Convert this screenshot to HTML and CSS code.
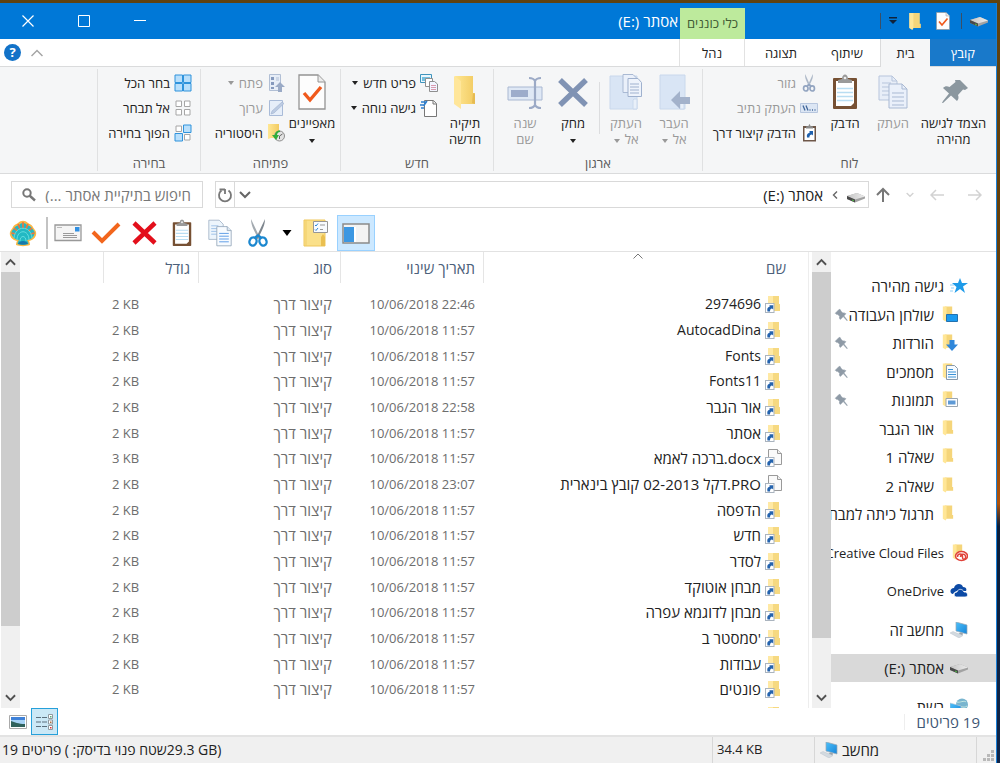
FILE: index.html
```html
<!DOCTYPE html>
<html lang="he" dir="rtl">
<head>
<meta charset="utf-8">
<title>אסתר (E:)</title>
<link rel="stylesheet" href="styles.css">
</head>
<body>
<svg class="sprite" aria-hidden="true">
  <defs>
    <linearGradient id="gFolder" x1="0" x2="1"><stop offset="0" stop-color="#ffe793"/><stop offset="1" stop-color="#f2cb62"/></linearGradient>
    <linearGradient id="gScreen" x1="0" y1="0" x2="1" y2="1"><stop offset="0" stop-color="#4cc0fa"/><stop offset="1" stop-color="#1784d8"/></linearGradient>
    <linearGradient id="gDrive" x1="0" x2="1"><stop offset="0" stop-color="#c4c4c4"/><stop offset="1" stop-color="#ececec"/></linearGradient>
  </defs>
  <symbol id="folder" viewBox="0 0 16 16"><path d="M5 0h8v10h1v4H5z" fill="#f5d57a"/><path d="M3 0h4v14l-1 2-3-2z" fill="#ffe697"/></symbol>
  <symbol id="bigfolder" viewBox="0 0 32 34"><path d="M6 1h18v17h2v11H10z" fill="url(#gFolder)"/><path d="M5 1l7 5v28l-7-5z" fill="#ffe69a"/><path d="M24 18l2 1v10l-3-1z" fill="#e6bb52"/></symbol>
  <symbol id="shortcut" viewBox="0 0 16 18"><path d="M3 1h11v8h1v7H3z" fill="#f6d981"/><path d="M3 1h5v9H3z" fill="#ffe9a4"/><rect x=".5" y="8.500" width="8.500" height="9" fill="#fff" stroke="#aab4bf"/><path d="M2.500 16.500c-.6-3.500.5-4.500 2-4.500v-1.700H8.200v4.200l-1.200-1c-1.300.2-2 1-2 3z" fill="#2463ae"/></symbol>
  <symbol id="filecut" viewBox="0 0 18 18"><path d="M3.500.5h9l4 4v11h-13z" fill="#fafafa" stroke="#9a9a9a"/><path d="M12.500.5v4h4" fill="#eee" stroke="#9a9a9a"/><rect x=".5" y="8.500" width="8.500" height="9" fill="#fff" stroke="#aab4bf"/><path d="M2.500 16.500c-.6-3.500.5-4.500 2-4.500v-1.700H8.200v4.200l-1.200-1c-1.300.2-2 1-2 3z" fill="#2463ae"/></symbol>
  <symbol id="drive" viewBox="0 0 18 12"><path d="M0 5L10 2l8 3.500v2L8 11.500 0 8z" fill="#a2a2a2"/><path d="M0 5L10 2l8 3.500L8 8.500z" fill="url(#gDrive)"/><path d="M0 5l8 3.500v3L0 8z" fill="#4a4a4a"/><path d="M5 8.500l2 1v1l-2-1z" fill="#4fc045"/></symbol>
  <symbol id="pin" viewBox="0 0 32 32"><path d="M20 3l9 9-3 2.500-2-.5-5 5c1 3 .5 5-1.500 7L11 19.500 3 28l-1 1 .5-2L9.500 18 5 13c2.500-2 5-2 7-1.500l5-5-.2-2z" fill="#8e9aa6" stroke="#8e9aa6" stroke-width="1.500"/></symbol>
  <symbol id="pc" viewBox="0 0 18 16"><path d="M6 0l11 3v9L6 9z" fill="url(#gScreen)" stroke="#9aa7b3" stroke-width=".7"/><path d="M10 10.500l3 .8-.5 2-4-1z" fill="#9aa3ab"/><path d="M0 11l3-1.500 10 4L9 16z" fill="#d3dae0" stroke="#b4bec7" stroke-width=".4"/></symbol>
  <symbol id="clipboard" viewBox="0 0 26 36"><rect x="1" y="4" width="24" height="31" rx="1" fill="#765033"/><path d="M4 7h18v22l-3 3H4z" fill="#fff"/><path d="M5 14.500h16M5 18.500h16M5 22.500h16M5 26.500h16" stroke="#b9ddf2" stroke-width="1.400"/><path d="M6 9V6l4-1c0-6 6-6 6 0l4 1v3z" fill="#9a9a9a"/><circle cx="13" cy="4" r="1.300" fill="#eee"/></symbol>
  <symbol id="copy" viewBox="0 0 30 34"><path d="M1 1h13l5 5v19H1z" fill="#edf5fc" stroke="#9eb0c4"/><path d="M4 8h9M4 11.500h10M4 15h7M4 18.500h7" stroke="#8fb8e4"/><path d="M11 9h13l5 5v19H11z" fill="#f7fbff" stroke="#8ea1b6"/><path d="M24 9v5h5" fill="#dce7f2" stroke="#8ea1b6"/><path d="M14 17.500h12M14 21h12M14 24.500h12M14 28h12" stroke="#5b9be6" stroke-width="1.200"/></symbol>
  <symbol id="dis-copy" viewBox="0 0 30 34"><path d="M1 1h13l5 5v19H1z" fill="#e8eef8" stroke="#b7c5dc"/><path d="M14 1v5h5M4 8h9M4 12h7M4 16h7M4 20h7" fill="none" stroke="#b7c5dc"/><path d="M11 9h13l5 5v19H11z" fill="#eaf0fa" stroke="#a9b9d3"/><path d="M24 9v5h5M14 18h12M14 22h12M14 26h12M14 30h12" fill="none" stroke="#a9b9d3"/></symbol>
  <symbol id="scissors" viewBox="0 0 20 28"><path d="M3 0l9 19-2 1C8 14 3 8 3 0z" fill="#a3aab0"/><path d="M17 0L8 19l2 1c2-6 7-12 7-20z" fill="#7e868e"/><g fill="none" stroke="#1b87cf" stroke-width="2.300"><ellipse cx="5" cy="22.500" rx="3.500" ry="4.200" transform="rotate(20 5 22.500)"/><ellipse cx="15" cy="22.500" rx="3.500" ry="4.200" transform="rotate(-20 15 22.500)"/><path d="M7 18.500l3-2 3 2"/></g></symbol>
  <symbol id="dis-scissors" viewBox="0 0 20 28"><path d="M4 0l8 18-2 1C8 14 3 8 4 0zM16 0L8 18l2 1c2-5 7-11 6-19z" fill="#aeb9c8"/><g fill="none" stroke="#93a5c1" stroke-width="2.600"><ellipse cx="5" cy="22.500" rx="3.500" ry="4"/><ellipse cx="15" cy="22.500" rx="3.500" ry="4"/><path d="M7 19l3-3 3 3"/></g></symbol>
  <symbol id="checkdoc" viewBox="0 0 28 36"><path d="M1 1h19l7 7v27H1z" fill="#fdfdfd" stroke="#949494" stroke-width="1.300"/><path d="M20 1v7h7" fill="#ececec" stroke="#949494"/><path d="M6 19l6 7L23 13" fill="none" stroke="#f0591c" stroke-width="3.400"/></symbol>
  <symbol id="caret" viewBox="0 0 8 4"><path d="M1 0h6L4 4z" fill="currentColor"/></symbol>
  <symbol id="up" viewBox="0 0 12 8"><path d="M1 7l5-5 5 5" fill="none" stroke="currentColor" stroke-width="2"/></symbol>
  <symbol id="down" viewBox="0 0 12 8"><path d="M1 1l5 5 5-5" fill="none" stroke="currentColor" stroke-width="2"/></symbol>
</svg>

<div class="window">
  <header class="titlebar">
    <div class="quick">
      <svg width="18" height="12"><use href="#drive"/></svg>
      <i class="bar"></i>
      <button aria-label="מאפיינים"><svg width="14" height="18"><use href="#checkdoc"/></svg></button>
      <button aria-label="תיקיה חדשה"><svg width="14" height="17" viewBox="2 0 13 16"><use href="#folder" width="16" height="16"/></svg></button>
      <button class="custom" aria-label="התאמה אישית"><svg width="8" height="8" viewBox="0 0 8 8"><path d="M0 0h8v1.500H0zM0 3h8L4 7z" fill="#10233b"/></svg></button>
      <i class="bar"></i>
    </div>
    <div class="context-tab">כלי כוננים</div>
    <h1 class="title">אסתר <bdi dir="ltr">(E:)</bdi></h1>
    <div class="controls">
      <button aria-label="מזעור"><svg width="12" height="12" viewBox="0 0 12 12"><path d="M0 5.500h12" stroke="#fff"/></svg></button>
      <button aria-label="הגדלה"><svg width="12" height="12" viewBox="0 0 12 12"><path d="M.5.5h11v11H.5z" fill="none" stroke="#fff"/></svg></button>
      <button aria-label="סגירה"><svg width="12" height="12" viewBox="0 0 12 12"><path d="M.5.5l11 11M11.500.5l-11 11" stroke="#fff" stroke-width="1.200"/></svg></button>
    </div>
  </header>

  <nav class="tabs">
    <button class="tab file">קובץ</button>
    <button class="tab home">בית</button>
    <button class="tab">שיתוף</button>
    <button class="tab">תצוגה</button>
    <button class="tab manage">נהל</button>
    <div class="tabs-end">
      <button aria-label="מזעור רצועת הכלים"><svg width="12" height="8" viewBox="0 0 12 8"><path d="M.5 7L6 1.500 11.500 7" fill="none" stroke="#a5a5a5" stroke-width="1.500"/></svg></button>
      <button class="help" aria-label="עזרה">?</button>
    </div>
  </nav>

  <section class="ribbon">
    <div class="group clip">
      <div class="body">
        <button class="big wide"><svg width="32" height="34" viewBox="0 0 32 34"><path d="M21 6l8 8-3 2-2-.5-5 5.500c1 2.500.5 4.500-1 6l-6-5.500L4 29l-1 0 1-2 6-7.500-6-5.500c2-2 4-2 6.500-1l6-5-.5-2z" transform="translate(1 -1)" fill="#8b979f"/></svg><span>הצמד לגישה<br>מהירה</span></button>
        <button class="big" disabled><svg width="30" height="34"><use href="#dis-copy"/></svg><span>העתק</span></button>
        <button class="big"><svg width="26" height="36"><use href="#clipboard"/></svg><span>הדבק</span></button>
        <div class="small-list">
          <button disabled><svg width="18" height="18"><use href="#dis-scissors"/></svg>גזור</button>
          <button disabled><svg width="18" height="18" viewBox="0 0 18 18"><path d="M.5 4.500h17v9H.5z" fill="#dce6f4" stroke="#b7c6de"/><path d="M3 6.500l2 5M6 6.500l2 5M9.500 11h1M12 11h1M14.500 11h1" stroke="#41679b" stroke-width="1.300"/></svg>העתק נתיב</button>
          <button><svg width="18" height="18" viewBox="0 0 18 18"><path d="M3 2h13v15.500H3z" fill="#6e5748"/><path d="M4.500 4h10v12h-10z" fill="#fff"/><path d="M6 4.500V2.500L8.500 2C9-.3 10-.3 10.500 2l2.500.5v2z" fill="#8b8b8b"/><path d="M7 13.500c-.6-3 .5-4.500 2.500-4.500V7H13v4.500l-1-1c-1.800 0-2.600 1-2.600 3z" fill="#1f60ac"/></svg>הדבק קיצור דרך</button>
        </div>
      </div>
      <h2>לוח</h2>
    </div>
    <div class="group organize">
      <div class="body">
        <button class="big" disabled><svg width="32" height="34" viewBox="0 0 32 34"><path d="M2 0h25v34H2z" fill="#d9e5f5" stroke="#c9d8ec"/><path d="M24 23h2v11h-4v-9z" fill="#e9f0f9" stroke="#c9d8ec"/><path d="M13 25l9-9v6h10v7H22v5z" fill="#a3b2cb"/></svg><span>העבר<br>אל <svg width="8" height="4"><use href="#caret"/></svg></span></button>
        <button class="big" disabled><svg width="34" height="36" viewBox="0 0 34 36"><path d="M1 2h27v33H1z" fill="#d9e5f5" stroke="#c9d8ec"/><path d="M25 25h3v10h-4v-9z" fill="#e9f0f9" stroke="#c9d8ec"/><path d="M14 .5h10l3 3v15H14z" fill="#eaf0fa" stroke="#a9b9d3"/><path d="M19 4.500h10l3.500 4v14H19z" fill="#eef3fb" stroke="#9fb1ce"/><path d="M21 10h9M21 13h9M21 16h9M21 19h9" stroke="#9fb1ce"/></svg><span>העתק<br>אל <svg width="8" height="4"><use href="#caret"/></svg></span></button>
        <i class="divider"></i>
        <button class="big"><svg width="32" height="34" viewBox="0 0 32 34"><path d="M3 5l26 25M29 5L3 30" stroke="#8093b4" stroke-width="5.500"/></svg><span>מחק<br><svg width="8" height="4"><use href="#caret"/></svg></span></button>
        <button class="big" disabled><svg width="36" height="34" viewBox="0 0 36 34"><path d="M1 12h34v13H1z" fill="#dfe8f5" stroke="#a9b8d2"/><path d="M4 15h17v7H4z" fill="#9daccb"/><path d="M22 3c4 0 5 1 6 3 1-2 2-3 6-3M22 33c4 0 5-1 6-3 1 2 2 3 6 3M28 5v26" fill="none" stroke="#9caac6" stroke-width="2.200"/></svg><span>שנה<br>שם</span></button>
      </div>
      <h2>ארגון</h2>
    </div>
    <div class="group new">
      <div class="body">
        <button class="big"><svg width="32" height="34"><use href="#bigfolder"/></svg><span>תיקיה<br>חדשה</span></button>
        <div class="small-list">
          <button><svg width="18" height="18" viewBox="0 0 18 18"><path d="M.5.5h11v8H.5z" fill="#eaf6fd" stroke="#3f94bd"/><path d="M2 3h8v4H2z" fill="#73bfdf"/><path d="M5.500 4.500h7v8h-7z" fill="#fff" stroke="#8f8f8f"/><path d="M9.500 7.500h5l3 2.500v7.500h-8z" fill="#f2f5ff" stroke="#8f8f8f"/><path d="M11 11.500h5M11 13.500h5M11 15.500h5" stroke="#d99aaf"/></svg>פריט חדש <svg width="8" height="4"><use href="#caret"/></svg></button>
          <button><svg width="18" height="18" viewBox="0 0 18 18"><path d="M4.500 1.500h9l3 3v13h-12z" fill="#fff" stroke="#777"/><path d="M13 1.500v3.500h3.500" fill="#eee" stroke="#777"/><path d="M1 3h6M0 6h5M1 9h3M3.500 7L7 2" stroke="#2c7fd0" stroke-width="1.500"/></svg>גישה נוחה <svg width="8" height="4"><use href="#caret"/></svg></button>
        </div>
      </div>
      <h2>חדש</h2>
    </div>
    <div class="group open">
      <div class="body">
        <button class="big"><svg width="28" height="36"><use href="#checkdoc"/></svg><span>מאפיינים<br><svg width="8" height="4"><use href="#caret"/></svg></span></button>
        <div class="small-list">
          <button disabled><svg width="18" height="18" viewBox="0 0 18 18"><path d="M2.500.5h11v16h-11z" fill="#e6edf7" stroke="#b1bfd5"/><path d="M4 3h3v3H4zM4 8h3v3H4zM4 13h3v2H4z" fill="#8599bd"/><path d="M9 4h3M9 6h3" stroke="#b1bfd5"/><path d="M8 13l5-5 5 5h-3v5h-4v-5z" fill="#9aaac6"/></svg>פתח <svg width="8" height="4"><use href="#caret"/></svg></button>
          <button disabled><svg width="18" height="18" viewBox="0 0 18 18"><path d="M2.500 1.500h13v15h-13z" fill="#e6eef9" stroke="#a9bbd8"/><path d="M4 15l1-3L15 3l2 1.500L7 14z" fill="#bccbe2" stroke="#9fb2d0" stroke-width=".6"/></svg>ערוך</button>
          <button><svg width="18" height="18" viewBox="0 0 18 18"><path d="M1 0h11v14H4l-3 1z" fill="url(#gFolder)"/><circle cx="12.500" cy="12" r="5" fill="#e3e3e3" stroke="#8d8d8d"/><path d="M12.500 12l3-2M12.500 12v3" stroke="#666"/><path d="M13 6.500C9 6.500 8 9 8 11H5l4 5 3-5H10c0-1.500 1-3 3-3z" fill="#2fae3a"/></svg>היסטוריה</button>
        </div>
      </div>
      <h2>פתיחה</h2>
    </div>
    <div class="group select">
      <div class="body">
        <div class="small-list">
          <button><svg width="18" height="18" viewBox="0 0 18 18"><path d="M1 1h7.500v7.500H1zM9.500 1H17v7.500H9.500zM1 9.500h7.500V17H1zM9.500 9.500H17V17H9.500z" fill="#b9dffb" stroke="#2f93dc"/></svg>בחר הכל</button>
          <button><svg width="18" height="18" viewBox="0 0 18 18"><path d="M2 2h5.500v5.500H2zM10.500 2H16v5.500h-5.500zM2 10.500h5.500V16H2zM10.500 10.500H16V16h-5.500z" fill="#fff" stroke="#a6a6a6"/></svg>אל תבחר</button>
          <button><svg width="18" height="18" viewBox="0 0 18 18"><path d="M2 2h5.500v5.500H2zM10.500 10.500H16V16h-5.500z" fill="#fff" stroke="#a6a6a6"/><path d="M9.500 1H17v7.500H9.500zM1 9.500h7.500V17H1z" fill="#b9dffb" stroke="#2f93dc"/></svg>הפוך בחירה</button>
        </div>
      </div>
      <h2>בחירה</h2>
    </div>
  </section>

  <div class="address-row">
    <div class="history">
      <button class="back" aria-label="הקודם"><svg width="14" height="12" viewBox="0 0 14 12"><path d="M0 6h13M8 1l5 5-5 5" fill="none" stroke="#d2d2d2" stroke-width="1.500"/></svg></button>
      <button aria-label="הבא"><svg width="14" height="12" viewBox="0 0 14 12"><path d="M14 6H1M6 1L1 6l5 5" fill="none" stroke="#d2d2d2" stroke-width="1.500"/></svg></button>
      <button class="recent" aria-label="מיקומים אחרונים"><svg width="8" height="6" viewBox="0 0 12 8"><use href="#down"/></svg></button>
      <button aria-label="למעלה"><svg width="14" height="16" viewBox="0 0 14 16"><path d="M7 15V2M1 8l6-6 6 6" fill="none" stroke="#777" stroke-width="2"/></svg></button>
    </div>
    <div class="address">
      <svg width="18" height="12"><use href="#drive"/></svg>
      <svg class="crumb" width="6" height="8" viewBox="0 0 6 8"><path d="M5 .5L1.500 4 5 7.500" fill="none" stroke="#666" stroke-width="1.400"/></svg>
      <span class="path">אסתר <bdi dir="ltr">(E:)</bdi></span>
      <button class="drop" aria-label="מיקומים קודמים"><svg width="12" height="8"><use href="#down"/></svg></button>
      <button class="refresh" aria-label="רענון"><svg width="16" height="16" viewBox="0 0 16 16"><path d="M4.500 3.500A6 6 0 1 0 11.500 3.500" fill="none" stroke="#777" stroke-width="1.800"/><path d="M7 1v5M7 1.500H1.500" transform="translate(1 1)" fill="none" stroke="#777" stroke-width="1.800"/></svg></button>
    </div>
    <label class="search">
      <input type="text" aria-label="חיפוש" placeholder="חיפוש בתיקיית אסתר ...)">
      <svg width="14" height="14" viewBox="0 0 14 14"><circle cx="5" cy="5" r="3.700" fill="none" stroke="#777" stroke-width="2"/><path d="M7.500 7.500L13 12.500" stroke="#777" stroke-width="2.400"/></svg>
    </label>
  </div>

  <div class="toolbar">
    <button aria-label="Classic Shell"><svg width="28" height="28" viewBox="0 0 28 28"><path d="M7 26c0-2 .5-3 1-4-5-1-8-5-7-9 .5-2 2-3 2.500-4C5 5 8 5 9 4c3-3 7-3 10 0 1 1 4 1 5.500 5 .5 1 2 2 2.500 4 1 4-2 8-7 9 .5 1 1 2 1 4-4 1.500-10 1.500-14 0z" fill="#fbb743"/><path d="M8.500 25c0-2 1-3 1.500-4-4 0-8-4-7.500-8C3 11 5 10 6 8c2-2 4-1 5-3 2-1.500 4-1.500 6 0 1 2 3 1 5 3 1 2 3 3 3.500 5 .5 4-3.500 8-7.500 8 .5 1 1.500 2 1.500 4-3 1-8 1-11 0z" fill="#23b9c3"/><path d="M14 3v6M9 5l2 5M19 5l-2 5M5 9l3.500 3M23 9l-3.500 3M2.500 14l4 1M25.500 14l-4 1" stroke="#f4733a" stroke-width="1.600"/><path d="M5 19c1-13 17-13 18 0M8 21c0-11 12-11 12 0M11 22c0-6 6-6 6 0" fill="none" stroke="#62dde0" stroke-width="1"/><path d="M9 25c1-4 9-4 10 0-3 1-7 1-10 0z" fill="#1779aa"/></svg></button>
    <i class="tool-sep"></i>
    <button aria-label="דואר"><svg width="28" height="18" viewBox="0 0 28 18"><path d="M1 1h26v15.500H1z" fill="#f5f5f5" stroke="#999" stroke-width="1.300"/><path d="M3 3.500h5" stroke="#bbb"/><path d="M21 3h4.500v4.500H21z" fill="#2f8fe2"/><path d="M9 9.500h11M9 11.500h14M9 13.500h14" stroke="#9a9a9a"/></svg></button>
    <button aria-label="אישור"><svg width="30" height="24" viewBox="0 0 30 24"><path d="M2 11l9 9L28 3" fill="none" stroke="#f2661d" stroke-width="4"/></svg></button>
    <button aria-label="מחיקה"><svg width="26" height="24" viewBox="0 0 26 24"><path d="M3 2l21 20M24 2L3 22" stroke="#e30f1b" stroke-width="4.500"/></svg></button>
    <button aria-label="הדבקה"><svg width="20" height="28" viewBox="0 0 26 36"><use href="#clipboard"/></svg></button>
    <button aria-label="העתקה"><svg width="24" height="28"><use href="#copy"/></svg></button>
    <button aria-label="גזירה"><svg width="20" height="28"><use href="#scissors"/></svg></button>
    <button class="more" aria-label="עוד"><svg width="12" height="6" viewBox="0 0 8 4"><path d="M1 0h6L4 4z"/></svg></button>
    <button aria-label="אפשרויות"><svg width="26" height="28" viewBox="0 0 26 28"><path d="M1 1h21v26H1z" fill="#fae08a" stroke="#efc75a"/><path d="M3 1v26" stroke="#f0cd68"/><path d="M18 27v-9l2-3 2 3v9z" fill="#eabf50"/><path d="M10.500 2.500h14v11h-14z" fill="#f8fbff" stroke="#969696"/><path d="M12 6l1 1 2-2.500M12 10.500l1 1 2-2.500" fill="none" stroke="#2b86d8"/><path d="M17 6h5M17 10.500h3" stroke="#999"/></svg></button>
    <button class="pressed" aria-label="חלונית ניווט"><svg width="28" height="21" viewBox="0 0 28 21"><path d="M1 1h26v19H1z" fill="#f3f3f3" stroke="#8a8a8a" stroke-width="1.500"/><path d="M2 4h10v15H2z" fill="#3c97e2"/><path d="M12 4h2v15h-2z" fill="#fff"/></svg></button>
  </div>

  <main class="content">
    <aside class="sidebar">
      <ul>
        <li class="root"><svg width="18" height="16" viewBox="0 0 18 16"><path d="M10 0l2 5h6l-5 3.500 2 6.500-5-4-5.500 4 2-6L2 5h6z" fill="#1e9be9"/><path d="M0 7h4M1 10h3M0 13h3" stroke="#8fd0f8"/></svg><span>גישה מהירה</span></li>
        <li><svg width="18" height="18" viewBox="0 0 18 18"><use href="#folder" width="15" height="16"/><path d="M6.500 8.500h11v7h-11z" fill="#1a9af0" stroke="#2371ae"/></svg><span>שולחן העבודה</span><svg class="pinned" width="14" height="14" viewBox="0 0 32 32"><use href="#pin" transform="translate(32 0) scale(-1 1)"/></svg></li>
        <li><svg width="18" height="18" viewBox="0 0 18 18"><use href="#folder" width="15" height="16"/><path d="M9.500 6h5v4.500H18L12 17 6 10.500h3.500z" fill="#3087da"/></svg><span>הורדות</span><svg class="pinned" width="14" height="14" viewBox="0 0 32 32"><use href="#pin" transform="translate(32 0) scale(-1 1)"/></svg></li>
        <li><svg width="18" height="18" viewBox="0 0 18 18"><use href="#folder" width="15" height="16"/><path d="M6.500 2.500h8l3 3v11h-11z" fill="#f7fbff" stroke="#8999a9"/><path d="M8 6.500h5M8 9h8M8 11.500h8M8 14h8" stroke="#3a92d6"/></svg><span>מסמכים</span><svg class="pinned" width="14" height="14" viewBox="0 0 32 32"><use href="#pin" transform="translate(32 0) scale(-1 1)"/></svg></li>
        <li><svg width="18" height="18" viewBox="0 0 18 18"><use href="#folder" width="15" height="16"/><path d="M6 7.500h11.500v8H6z" fill="#fff" stroke="#9aa6b1"/><path d="M8 9.500h7.500v4H8z" fill="#5e9ad6"/></svg><span>תמונות</span><svg class="pinned" width="14" height="14" viewBox="0 0 32 32"><use href="#pin" transform="translate(32 0) scale(-1 1)"/></svg></li>
        <li><svg width="18" height="18" viewBox="0 0 18 18"><use href="#folder" width="15" height="16"/></svg><span>אור הגבר</span></li>
        <li><svg width="18" height="18" viewBox="0 0 18 18"><use href="#folder" width="15" height="16"/></svg><span>שאלה 1</span></li>
        <li><svg width="18" height="18" viewBox="0 0 18 18"><use href="#folder" width="15" height="16"/></svg><span>שאלה 2</span></li>
        <li><svg width="18" height="18" viewBox="0 0 18 18"><use href="#folder" width="15" height="16"/></svg><span>תרגול כיתה למבחן</span></li>
        <li class="root"><svg width="18" height="18" viewBox="0 0 18 18"><use href="#folder" width="15" height="16"/><ellipse cx="11.500" cy="12" rx="6" ry="4.500" fill="#fff" stroke="#e0423a" stroke-width="1.500"/><path d="M7.500 13c0-4 5-4 5 0s4 2 3-1-5-2-5 1" fill="none" stroke="#e0423a" stroke-width="1.500"/></svg><span dir="ltr">Creative Cloud Files</span></li>
        <li class="root"><svg width="18" height="14" viewBox="0 0 18 14"><path d="M3 10c-4-1-3-6 1-6 1-5 8-5 9-1 3 0 4 2 3 4H8c-2 0-4 1-5 3z" fill="#0c4aa5"/><path d="M6 13c-3-1-2-5 1-5 1-4 6-3 7 0 4-1 5 5 1 5z" fill="#0c4aa5" stroke="#fff" stroke-width=".8"/></svg><span dir="ltr">OneDrive</span></li>
        <li class="root"><svg width="18" height="16"><use href="#pc"/></svg><span>מחשב זה</span></li>
        <li class="root selected"><svg width="18" height="12"><use href="#drive"/></svg><span>אסתר <bdi dir="ltr">(E:)</bdi></span></li>
        <li class="root"><svg width="18" height="18" viewBox="0 0 18 18"><circle cx="12" cy="6.500" r="6" fill="#79b5cf"/><path d="M7 4c3 1 7-2 9 0M7 8c3-1 6 3 10 0" stroke="#c5e8e3" fill="none"/><path d="M0 5l11 3v9L0 13z" fill="url(#gScreen)" stroke="#b8c8d4" stroke-width=".6"/></svg><span>רשת</span></li>
      </ul>
    </aside>
    <div class="scrollbar">
      <button aria-label="גלילה למעלה"><svg width="11" height="8"><use href="#up"/></svg></button>
      <div class="track"><div class="thumb nav-thumb"></div></div>
      <button aria-label="גלילה למטה"><svg width="11" height="8"><use href="#down"/></svg></button>
    </div>
    <div class="files">
      <table>
        <thead><tr>
          <th class="name"><div>שם<svg class="sort" width="10" height="6" viewBox="0 0 10 6"><path d="M.5 5.500L5 1l4.500 4.500" fill="none" stroke="#777"/></svg></div></th>
          <th class="date"><div>תאריך שינוי</div></th>
          <th class="type"><div>סוג</div></th>
          <th class="size"><div>גודל</div></th>
          <th></th>
        </tr></thead>
        <tbody>
          <tr><td><svg width="16" height="18"><use href="#shortcut"/></svg><bdi class="latin" dir="ltr">2974696</bdi></td><td dir="ltr">10/06/2018 22:46</td><td>קיצור דרך</td><td dir="ltr">2 KB</td><td></td></tr>
          <tr><td><svg width="16" height="18"><use href="#shortcut"/></svg><bdi class="latin" dir="ltr">AutocadDina</bdi></td><td dir="ltr">10/06/2018 11:57</td><td>קיצור דרך</td><td dir="ltr">2 KB</td><td></td></tr>
          <tr><td><svg width="16" height="18"><use href="#shortcut"/></svg><bdi class="latin" dir="ltr">Fonts</bdi></td><td dir="ltr">10/06/2018 11:57</td><td>קיצור דרך</td><td dir="ltr">2 KB</td><td></td></tr>
          <tr><td><svg width="16" height="18"><use href="#shortcut"/></svg><bdi class="latin" dir="ltr">Fonts11</bdi></td><td dir="ltr">10/06/2018 11:57</td><td>קיצור דרך</td><td dir="ltr">2 KB</td><td></td></tr>
          <tr><td><svg width="16" height="18"><use href="#shortcut"/></svg><bdi dir="ltr">אור הגבר</bdi></td><td dir="ltr">10/06/2018 22:58</td><td>קיצור דרך</td><td dir="ltr">2 KB</td><td></td></tr>
          <tr><td><svg width="16" height="18"><use href="#shortcut"/></svg><bdi dir="ltr">אסתר</bdi></td><td dir="ltr">10/06/2018 11:57</td><td>קיצור דרך</td><td dir="ltr">2 KB</td><td></td></tr>
          <tr><td><svg width="16" height="18" viewBox="0 0 16 18" overflow="visible"><use href="#filecut" width="18" height="18"/></svg><bdi dir="ltr">ברכה לאמא.docx</bdi></td><td dir="ltr">10/06/2018 11:57</td><td>קיצור דרך</td><td dir="ltr">3 KB</td><td></td></tr>
          <tr><td><svg width="16" height="18" viewBox="0 0 16 18" overflow="visible"><use href="#filecut" width="18" height="18"/></svg><bdi dir="ltr">דקל 02-2013 קובץ בינארית.PRO</bdi></td><td dir="ltr">10/06/2018 23:07</td><td>קיצור דרך</td><td dir="ltr">2 KB</td><td></td></tr>
          <tr><td><svg width="16" height="18"><use href="#shortcut"/></svg><bdi dir="ltr">הדפסה</bdi></td><td dir="ltr">10/06/2018 11:57</td><td>קיצור דרך</td><td dir="ltr">2 KB</td><td></td></tr>
          <tr><td><svg width="16" height="18"><use href="#shortcut"/></svg><bdi dir="ltr">חדש</bdi></td><td dir="ltr">10/06/2018 11:57</td><td>קיצור דרך</td><td dir="ltr">2 KB</td><td></td></tr>
          <tr><td><svg width="16" height="18"><use href="#shortcut"/></svg><bdi dir="ltr">לסדר</bdi></td><td dir="ltr">10/06/2018 11:57</td><td>קיצור דרך</td><td dir="ltr">2 KB</td><td></td></tr>
          <tr><td><svg width="16" height="18"><use href="#shortcut"/></svg><bdi dir="ltr">מבחן אוטוקד</bdi></td><td dir="ltr">10/06/2018 11:57</td><td>קיצור דרך</td><td dir="ltr">2 KB</td><td></td></tr>
          <tr><td><svg width="16" height="18"><use href="#shortcut"/></svg><bdi dir="ltr">מבחן לדוגמא עפרה</bdi></td><td dir="ltr">10/06/2018 11:57</td><td>קיצור דרך</td><td dir="ltr">2 KB</td><td></td></tr>
          <tr><td><svg width="16" height="18"><use href="#shortcut"/></svg><bdi dir="ltr">סמסטר ב'</bdi></td><td dir="ltr">10/06/2018 11:57</td><td>קיצור דרך</td><td dir="ltr">2 KB</td><td></td></tr>
          <tr><td><svg width="16" height="18"><use href="#shortcut"/></svg><bdi dir="ltr">עבודות</bdi></td><td dir="ltr">10/06/2018 11:57</td><td>קיצור דרך</td><td dir="ltr">2 KB</td><td></td></tr>
          <tr><td><svg width="16" height="18"><use href="#shortcut"/></svg><bdi dir="ltr">פונטים</bdi></td><td dir="ltr">10/06/2018 11:57</td><td>קיצור דרך</td><td dir="ltr">2 KB</td><td></td></tr>
          <tr><td><svg width="16" height="18"><use href="#shortcut"/></svg></td><td></td><td></td><td></td><td></td></tr>
        </tbody>
      </table>
    </div>
    <div class="scrollbar list-scroll">
      <button aria-label="גלילה למעלה"><svg width="11" height="8"><use href="#up"/></svg></button>
      <div class="track"><div class="thumb list-thumb"></div></div>
      <button aria-label="גלילה למטה"><svg width="11" height="8"><use href="#down"/></svg></button>
    </div>
  </main>

  <div class="details-bar">
    <span class="count">19 פריטים</span>
    <div class="views">
      <button class="active" aria-label="פרטים"><svg width="18" height="16" viewBox="0 0 18 16"><path d="M0 3.500h5M6 3.500h5M0 8h5M6 8h5M0 12.500h5M6 12.500h5" stroke="#5c6f7d" stroke-width="1.200"/><path d="M12.500.5h4v4h-4zM12.500 6h4v4h-4zM12.500 11.500h4v4h-4z" fill="#fff" stroke="#90999f"/><path d="M14 2h1.500v1.500H14z" fill="#5a7"/><path d="M14 7.500h1.500V9H14z" fill="#a96a3a"/><path d="M14 13h1.500v1.500H14z" fill="#d33"/></svg></button>
      <button aria-label="תמונות ממוזערות"><svg width="18" height="14" viewBox="0 0 18 14"><path d="M.5.5h17v13H.5z" fill="#fff" stroke="#aaa"/><path d="M2 2h14v10H2z" fill="#a7d3f6"/><path d="M2 2h14v3H2z" fill="#3f81d8"/><path d="M2 6c4 1 7 3 14 3v3H2z" fill="#30625c"/></svg></button>
    </div>
  </div>

  <footer class="status">
    <span class="grip"><svg width="11" height="11" viewBox="0 0 11 11"><path d="M8 0h3v3H8zM8 4h3v3H8zM4 4h3v3H4zM8 8h3v3H8zM4 8h3v3H4zM0 8h3v3H0z" fill="#b9b9b9"/></svg></span>
    <span class="zone"><svg width="18" height="16"><use href="#pc"/></svg>מחשב</span>
    <span class="bytes" dir="ltr">34.4 KB</span>
    <span class="free" dir="ltr">19 <bdi>פריטים</bdi> ( <bdi dir="rtl">שטח פנוי בדיסק:</bdi>29.3 GB)</span>
  </footer>
</div>
</body>
</html>
```
FILE: styles.css
```css
* { box-sizing: border-box; }

body {
  margin: 0;
  height: 100vh;
  padding: 3px 3px 0 0;
  overflow: hidden;
  background: linear-gradient(#5f4210 0%, #6a3d06 50%, #b0520a 66%, #0c1d38 69%, #10264a 100%);
  color: #222;
  font: 13px/16px "Open Sans", "Noto Sans", sans-serif;
}

button {
  margin: 0;
  padding: 0;
  border: 0;
  background: none;
  color: inherit;
  font: inherit;
}

svg { display: block; flex: none; }
.sprite { position: absolute; width: 0; height: 0; }
h1, h2, ul { margin: 0; padding: 0; font-weight: normal; }

.window {
  display: flex;
  flex-direction: column;
  height: 100%;
  border-right: 1px solid #1a7fd6;
  background: #fff;
}

/* title bar */
.titlebar {
  display: flex;
  flex: none;
  height: 36px;
  background: #0078d7;
}
.quick {
  display: flex;
  align-items: center;
  gap: 8px;
  width: 251px;
  padding-right: 8px;
}
.quick .bar { width: 1px; height: 16px; background: #3a4f66; }
.quick button { padding: 0 3px; }
.quick .custom { padding: 0; }
.context-tab {
  width: 65px;
  margin-top: 5px;
  background: #bdea9c;
  color: #3f5b34;
  line-height: 31px;
  text-align: center;
}
.title {
  flex: 1;
  padding-right: 2px;
  color: #fff;
  font-size: 15px;
  line-height: 36px;
}
.controls { display: flex; }
.controls button { display: grid; place-items: center; width: 56px; }

/* ribbon tabs */
.tabs { display: flex; flex: none; height: 27px; }
.tab { width: 66px; }
.tab.file { background: #1979ca; color: #fff; }
.tab.home {
  width: 50px;
  margin-bottom: -1px;
  border: 1px solid #dadbdc;
  border-width: 0 0 0 1px;
  background: #f5f6f7;
  z-index: 1;
}
.tab.manage {
  margin-right: 3px;
  border: solid #e2e2e2;
  border-width: 0 1px;
}
.tabs-end {
  display: flex;
  align-items: center;
  gap: 10px;
  margin-right: auto;
  padding-left: 4px;
}
.help {
  width: 17px;
  height: 17px;
  border-radius: 50%;
  background: #1272c8;
  color: #fff;
  font-weight: bold;
  line-height: 17px;
}

/* ribbon */
.ribbon {
  display: flex;
  flex: none;
  border: solid #dadbdc;
  border-width: 1px 0;
  background: #f5f6f7;
}
.group {
  display: flex;
  flex-direction: column;
  margin: 2px 0;
  border-left: 1px solid #e0e1e2;
}
.group h2 {
  color: #5a5a5a;
  font-size: 13px;
  text-align: center;
}
.clip { width: 294px; }
.organize { width: 209px; }
.new { width: 153px; }
.open { width: 140px; }
.select { width: 103px; }
.body {
  display: flex;
  height: 86px;
  padding: 5px 4px 0;
}
.clip .body { padding-right: 6px; }
.select .body { padding-right: 8px; }
.big {
  display: flex;
  flex-direction: column;
  align-items: center;
  gap: 5px;
  width: 48px;
  white-space: nowrap;
}
.big > svg { height: 36px; }
.big span svg { display: inline-block; vertical-align: middle; }
.big.wide { width: 73px; }
.ribbon button:disabled { color: #999; }
.divider { width: 1px; height: 52px; margin: 8px 2px; background: #dcdddf; }
.small-list {
  display: flex;
  flex-direction: column;
  gap: 7px;
  padding-right: 3px;
}
.select .small-list { padding: 0; }
.small-list button {
  display: flex;
  align-items: center;
  gap: 4px;
  height: 18px;
  white-space: nowrap;
}

/* address row */
.address-row {
  display: flex;
  flex: none;
  gap: 12px;
  padding: 7px 14px 7px 11px;
}
.history { display: flex; align-items: center; gap: 16px; width: 101px; }
.history .back { margin-left: 8px; }
.history .recent { color: #d2d2d2; }
.address, .search {
  display: flex;
  align-items: center;
  height: 27px;
  border: 1px solid #d9d9d9;
}
.address { flex: 1; padding-right: 3px; color: #666; }
.address > svg:first-child { margin-top: 4px; }
.address .crumb { margin: 0 9px; }
.path { flex: 1; color: #222; font-size: 15px; }
.drop { padding: 0 3px; }
.refresh {
  height: 100%;
  margin-right: 1px;
  padding: 0 1px;
  border-right: 1px solid #d9d9d9;
}
.search { width: 192px; padding: 0 11px 0 10px; }
.search input {
  flex: 1;
  min-width: 0;
  padding: 0;
  border: 0;
  outline: 0;
  font: inherit;
  font-size: 15px;
}
.search input::placeholder { color: #777; opacity: 1; }

/* icon toolbar */
.toolbar {
  display: flex;
  flex: none;
  direction: ltr;
  align-items: center;
  height: 37px;
  padding-left: 4px;
  border-bottom: 1px solid #e2e2e2;
}
.toolbar button { display: grid; place-items: center; width: 38px; height: 36px; }
.toolbar .tool-sep { width: 2px; height: 32px; margin: 0 1px 0 4px; background: #c3c3c3; }
.toolbar .more { width: 20px; }
.toolbar .pressed { margin-left: 2px; border: 1px solid #99d1ff; background: #cce8ff; }

/* panes */
.content { display: flex; flex: 1; min-height: 0; }
.sidebar {
  width: 165px;
  overflow: hidden;
  padding-top: 20px;
  font-size: 15px;
}
.sidebar ul { list-style: none; }
.sidebar li {
  display: flex;
  align-items: center;
  gap: 6px;
  height: 28px;
  padding: 0 38px 0 3px;
  white-space: nowrap;
}
.sidebar li:nth-child(even) { height: 29px; }
.sidebar span { flex: 1; min-width: 0; }
.sidebar span[dir="ltr"] {
  display: flex;
  justify-content: flex-end;
  font-size: 13px;
}
.sidebar .root { padding-right: 28px; }
.sidebar .root ~ .root { margin-top: 10px; }
.sidebar .selected { background: #d9d9d9; }
.scrollbar {
  display: flex;
  flex-direction: column;
  width: 19px;
  background: #f0f0f0;
  color: #505050;
}
.scrollbar button { display: grid; place-items: center; height: 20px; }
.track { flex: 1; }
.thumb { background: #cdcdcd; }
.nav-thumb { height: 88%; }
.list-thumb { height: 85%; }
.list-scroll { margin-left: 1px; }
.files {
  flex: 1;
  min-width: 0;
  margin-right: 3px;
  overflow: hidden;
  border-right: 1px solid #ededed;
}
table {
  width: 100%;
  border-spacing: 0;
  table-layout: fixed;
  color: #6d6d6d;
}
th { padding: 0 0 8px; font-weight: normal; text-align: right; }
th div {
  position: relative;
  height: 31px;
  padding-right: 8px;
  border-left: 1px solid #e5e5e5;
  color: #4c607a;
  font-size: 15px;
  line-height: 32px;
}
th.name { width: 325px; }
th.name div { padding-right: 22px; }
th.date { width: 143px; }
th.type { width: 142px; }
th.size { width: 95px; }
.sort { position: absolute; top: 1px; left: 149px; }
tbody tr { height: 26px; }
tbody tr:nth-child(3n) { height: 25px; }
td { padding: 0 8px; white-space: nowrap; }
td:first-child {
  display: flex;
  align-items: center;
  gap: 4px;
  height: 25px;
  padding-right: 27px;
  color: #222;
  font-size: 15px;
}
td .latin { font-size: 14px; }
td:nth-child(2) { text-align: right; }
td:nth-child(3) { font-size: 15px; }
td:nth-child(4) { padding-left: 9px; text-align: left; }

/* details and status */
.details-bar {
  display: flex;
  flex: none;
  align-items: center;
  justify-content: space-between;
  height: 27px;
  padding-right: 16px;
}
.count {
  padding-left: 12px;
  border-left: 1px solid #eee;
  color: #3f5775;
  font-size: 15px;
}
.views { display: flex; padding-left: 4px; }
.views button { display: grid; place-items: center; width: 27px; height: 27px; }
.views .active { border: 1px solid #26a0da; background: #cbe8f6; }
.status {
  display: flex;
  flex: none;
  height: 28px;
  border-top: 2px solid #e3e3e3;
  background: #f0f0f0;
  line-height: 25px;
}
.status span { border-left: 1px solid #d7d7d7; }
.status .grip { display: flex; align-items: flex-end; width: 20px; padding: 0 2px 2px; }
.status .zone {
  display: flex;
  flex-direction: row-reverse;
  align-items: center;
  gap: 4px;
  width: 162px;
  padding-left: 5px;
  font-size: 15px;
}
.status .bytes { width: 102px; padding-left: 4px; }
.status .free { flex: 1; padding-left: 2px; border: 0; font-size: 14px; }
```
